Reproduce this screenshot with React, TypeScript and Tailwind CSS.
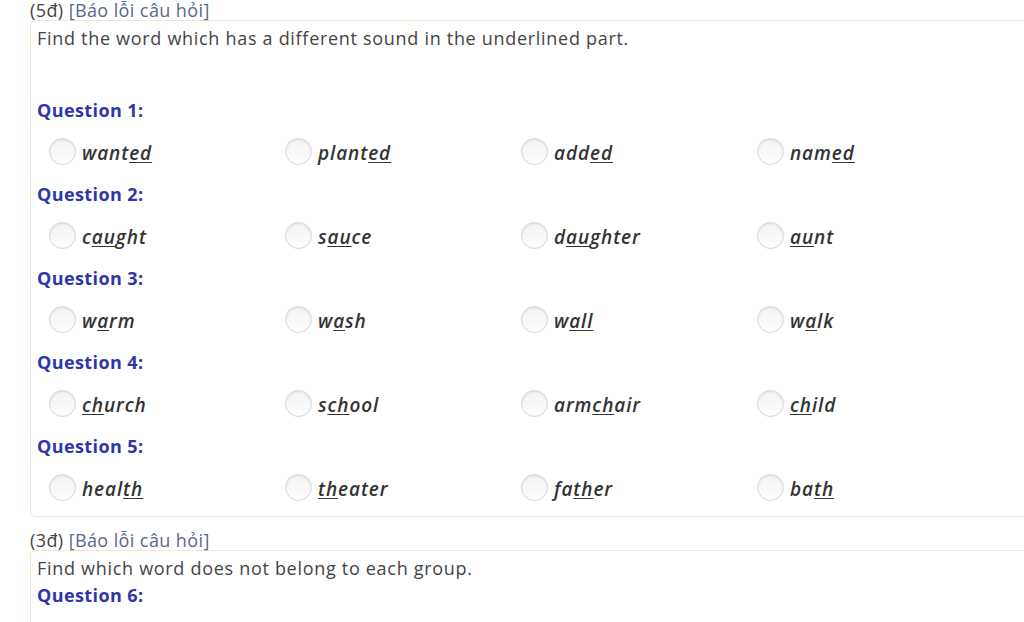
import React from "react";

type Opt = { pre: string; u: string; post: string };

const questions: Opt[][] = [
  [
    { pre: "want", u: "ed", post: "" },
    { pre: "plant", u: "ed", post: "" },
    { pre: "add", u: "ed", post: "" },
    { pre: "nam", u: "ed", post: "" },
  ],
  [
    { pre: "c", u: "au", post: "ght" },
    { pre: "s", u: "au", post: "ce" },
    { pre: "d", u: "au", post: "ghter" },
    { pre: "", u: "au", post: "nt" },
  ],
  [
    { pre: "w", u: "a", post: "rm" },
    { pre: "w", u: "a", post: "sh" },
    { pre: "w", u: "all", post: "" },
    { pre: "w", u: "a", post: "lk" },
  ],
  [
    { pre: "", u: "ch", post: "urch" },
    { pre: "s", u: "ch", post: "ool" },
    { pre: "arm", u: "ch", post: "air" },
    { pre: "", u: "ch", post: "ild" },
  ],
  [
    { pre: "heal", u: "th", post: "" },
    { pre: "", u: "th", post: "eater" },
    { pre: "fa", u: "th", post: "er" },
    { pre: "ba", u: "th", post: "" },
  ],
];

function Radio() {
  return (
    <span className="inline-block w-[27px] h-[27px] rounded-full border border-[#d6d6d6] bg-gradient-to-b from-[#f2f2f2] to-white shadow-[inset_0_1px_2px_rgba(0,0,0,0.08)] shrink-0" />
  );
}

function Header({ pts }: { pts: string }) {
  return (
    <div className="h-[20px] pl-[30px] text-[18px] leading-[20px] text-[#444] tracking-[0.4px] whitespace-nowrap">
      ({pts}){" "}
      <span className="text-[#5a6690]">[Báo lỗi câu hỏi]</span>
    </div>
  );
}

export default function App() {
  return (
    <div
      className="w-[1024px] h-[622px] overflow-hidden bg-white"
      style={{ fontFamily: "'Open Sans', Lato, sans-serif" }}
    >
      <Header pts="5đ" />
      <div className="ml-[30px] w-[1010px] border border-[#f2e6cc] rounded-[6px] pl-[6px] pb-[0px]">
        <div className="h-[75px] pt-[5px] text-[18px] leading-[24px] text-[#444] tracking-[0.7px]">
          Find the word which has a different sound in the underlined part.
        </div>
        {questions.map((q, i) => (
          <div key={i}>
            <div className="h-[28px] text-[18px] leading-[28px] font-bold text-[#2e37a6] tracking-[0.4px]">
              Question {i + 1}:
            </div>
            <div className="h-[56px] grid grid-cols-[236px_236px_236px_236px] pl-[12px] pt-[14px]">
              {q.map((o, j) => (
                <div key={j} className="flex items-start gap-[6px]">
                  <Radio />
                  <span className="mt-[3px] text-[19px] leading-[24px] italic font-semibold text-[#333] tracking-[0.9px]">
                    {o.pre}
                    <span className="underline underline-offset-2">{o.u}</span>
                    {o.post}
                  </span>
                </div>
              ))}
            </div>
          </div>
        ))}
      </div>
      <div className="h-[13px]" />
      <Header pts="3đ" />
      <div className="ml-[30px] w-[1010px] border border-[#f2e6cc] rounded-[6px] pl-[6px] h-[200px]">
        <div className="h-[30px] pt-[5px] text-[18px] leading-[24px] text-[#444] tracking-[0.7px]">
          Find which word does not belong to each group.
        </div>
        <div className="h-[28px] text-[18px] leading-[28px] font-bold text-[#2e37a6] tracking-[0.4px]">
          Question 6:
        </div>
      </div>
    </div>
  );
}
